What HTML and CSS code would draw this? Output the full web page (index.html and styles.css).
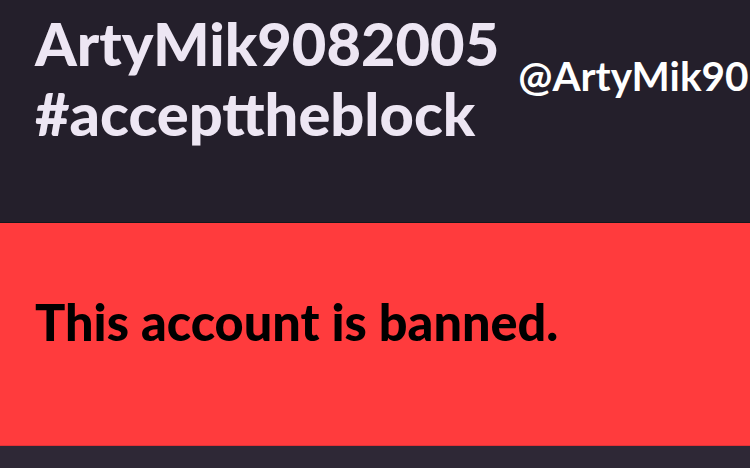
FILE: index.html
```html
<!DOCTYPE html>
<html>
<head>
<meta charset="utf-8">
<link rel="stylesheet" href="styles.css">
</head>
<body>
<div class="page">
  <header class="header">
    <div class="names">
      <div class="name">ArtyMik9082005</div>
      <div class="name">#accepttheblock</div>
    </div>
    <div class="handle">@ArtyMik90</div>
  </header>
  <section class="banner">
    <div class="banned">This account is banned.</div>
  </section>
  <footer class="footer"></footer>
</div>
</body>
</html>
```
FILE: styles.css
```css
html, body {
  margin: 0;
  padding: 0;
  background: #2e2836;
  overflow: hidden;
}
.page {
  width: 750px;
  height: 468px;
  display: flex;
  flex-direction: column;
  font-family: "Lato", "Liberation Sans", sans-serif;
}
.header {
  height: 223px;
  background: #241f2b;
  border-bottom: 1px solid #15171c;
  display: flex;
  align-items: flex-start;
  gap: 19px;
  padding: 0 0 0 35px;
  box-sizing: border-box;
  white-space: nowrap;
  overflow: hidden;
}
.names {
  padding-top: 8px;
}
.name {
  color: #ede6f3;
  font-size: 59.6px;
  font-weight: 900;
  line-height: 70px;
}
.handle {
  color: #ffffff;
  font-size: 40.5px;
  font-weight: 700;
  line-height: 48px;
  margin-top: 52px;
}
.banner {
  height: 223px;
  background: #ff3b3d;
  display: flex;
  align-items: center;
  padding-left: 35px;
  border-bottom: 1px solid #e23236;
  box-sizing: border-box;
}
.banned {
  color: #000000;
  font-size: 50.4px;
  font-weight: 900;
  margin-top: -26px;
}
.footer {
  flex: 1;
  background: #2e2836;
}
```
